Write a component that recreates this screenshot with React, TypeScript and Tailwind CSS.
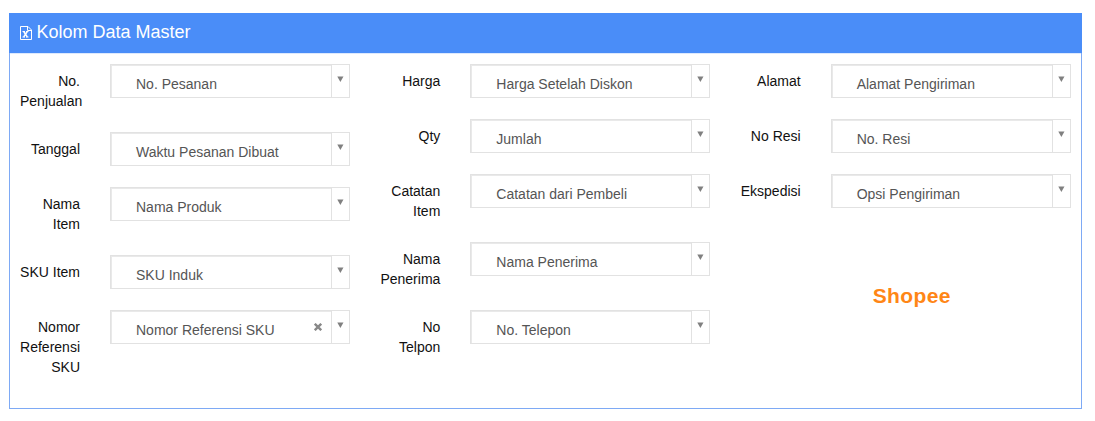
interface Field {
  label: string;
  value: string;
  clearable?: boolean;
}

const columns: Field[][] = [
  [
    { label: 'No. Penjualan', value: 'No. Pesanan' },
    { label: 'Tanggal', value: 'Waktu Pesanan Dibuat' },
    { label: 'Nama Item', value: 'Nama Produk' },
    { label: 'SKU Item', value: 'SKU Induk' },
    { label: 'Nomor Referensi SKU', value: 'Nomor Referensi SKU', clearable: true },
  ],
  [
    { label: 'Harga', value: 'Harga Setelah Diskon' },
    { label: 'Qty', value: 'Jumlah' },
    { label: 'Catatan Item', value: 'Catatan dari Pembeli' },
    { label: 'Nama Penerima', value: 'Nama Penerima' },
    { label: 'No Telpon', value: 'No. Telepon' },
  ],
  [
    { label: 'Alamat', value: 'Alamat Pengiriman' },
    { label: 'No Resi', value: 'No. Resi' },
    { label: 'Ekspedisi', value: 'Opsi Pengiriman' },
  ],
];

function SheetIcon() {
  return (
    <svg width="12" height="14" viewBox="0 0 12 14" fill="none" stroke="currentColor">
      <path d="M0.5 0.5h7.5l3.5 3.5v9.5h-11z" />
      <path d="M7.5 0.5v4h4" />
      <path d="M2.5 5.5h2.5M6 5.5h2.5M2.5 11h2.5M6 11h2.5" />
      <path d="M3.7 5.5l3.6 5.5M7.3 5.5L3.7 11" strokeWidth="1.4" />
    </svg>
  );
}

function SelectBox({ value, clearable }: { value: string; clearable?: boolean }) {
  return (
    <button className="flex h-[34px] w-60 shrink-0 border border-[#e2e2e2] bg-white text-left">
      <span className="flex h-8 min-w-0 flex-1 items-start justify-between border-t border-l border-[#e9e9e9] pl-6 pr-[9px] text-[#555]">
        <span className="pt-2 leading-5 whitespace-nowrap">{value}</span>
        {clearable && (
          <svg className="mt-[11px]" width="8" height="8" viewBox="0 0 8 8" stroke="#888" strokeWidth="2.4">
            <path d="M0.8 0.8l6.4 6.4M7.2 0.8l-6.4 6.4" />
          </svg>
        )}
      </span>
      <span className="flex h-8 w-[18px] border-l border-[#e2e2e2] pt-[11px] pl-[5px]">
        <svg width="7" height="6" viewBox="0 0 7 6" fill="#808080">
          <path d="M0.3 0.5h6.2l-3.1 5.4z" />
        </svg>
      </span>
    </button>
  );
}

function FieldRow({ label, value, clearable }: Field) {
  return (
    <div className="flex items-start gap-[30px]">
      <label className="w-[60px] shrink-0 pt-[7px] text-right leading-5 text-[#111]">{label}</label>
      <SelectBox value={value} clearable={clearable} />
    </div>
  );
}

export default function App() {
  return (
    <div className="h-[421px] bg-white pt-[13px] pr-[13px] pl-[9px] font-['Liberation_Sans',Arial,sans-serif] text-sm">
      <section className="h-[396px] border border-[#7eaaf5]">
        <header className="-mx-px -mt-px flex h-10 items-center gap-[4.5px] bg-[#4a8df8] pl-[11px] text-white">
          <SheetIcon />
          <h1 className="pb-[2px] text-lg leading-5">Kolom Data Master</h1>
        </header>
        <div className="grid grid-cols-3 gap-[30px] border-t border-[#dde9fd] p-2.5">
          {columns.map((fields, i) => (
            <div key={i} className="flex flex-col gap-[21px]">
              {fields.map((field) => (
                <FieldRow key={field.label} {...field} />
              ))}
              {i === 2 && (
                <p className="mt-[55px] pl-[132px] text-[21px] leading-6 font-bold tracking-[0.4px] text-[#ff8616]">
                  Shopee
                </p>
              )}
            </div>
          ))}
        </div>
      </section>
    </div>
  );
}
